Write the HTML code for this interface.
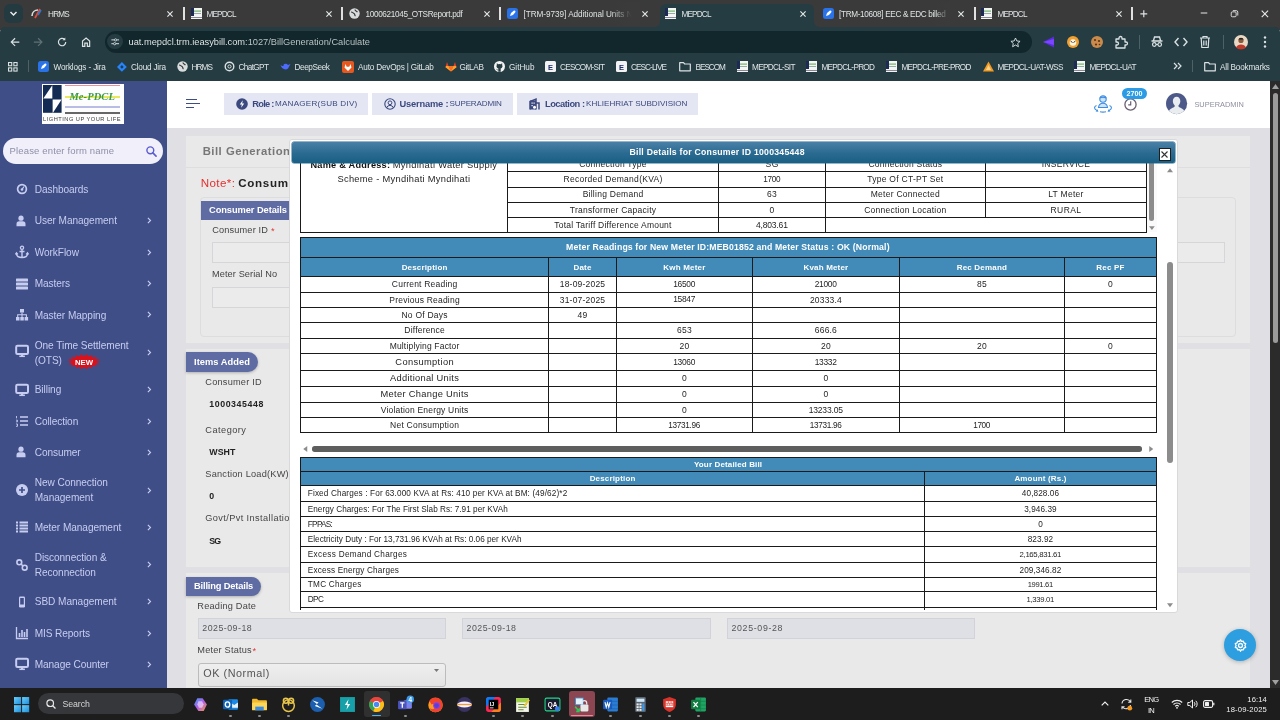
<!DOCTYPE html>
<html lang="en"><head><meta charset="utf-8"><title>MEPDCL</title>
<style>
*{box-sizing:border-box;margin:0;padding:0}
html,body{width:1280px;height:720px;overflow:hidden;background:#e4e4ea;font-family:"Liberation Sans",sans-serif}
.abs{position:absolute}
#root{position:relative;width:1280px;height:720px;overflow:hidden;will-change:transform}
svg{display:block;overflow:visible}
/* chrome */
#tabs{left:0;top:0;width:1280px;height:30px;background:#3a3a3a}
#toolbar{left:0;top:26.500px;width:1280px;height:53.500px;background:#253c42;border-radius:5px 5px 0 0}
.tab{position:absolute;top:0;height:27px;color:#dfe3e4;font-size:11.3px;line-height:27px;white-space:nowrap;overflow:hidden}
.tabx{position:absolute;top:9px;width:9px;height:9px}
.tsep{position:absolute;top:7px;width:1.5px;height:13px;background:#e0e0e0}
.fav{position:absolute;top:8px;width:11px;height:11px}
#url{left:105px;top:31px;width:927px;height:22px;border-radius:11px;background:#11272c}
.bm{position:absolute;top:56px;height:20px;line-height:20px;color:#e1e6e7;font-size:11px;white-space:nowrap;letter-spacing:-0.1px}
.bmi{position:absolute;top:61px;width:11px;height:11px}
/* sidebar */
#side{left:0;top:80px;width:167px;height:608px;background:#404e88}
.mi{position:absolute;left:34px;color:#c7cdf0;font-size:13px;line-height:15.5px;white-space:nowrap}
.chev{position:absolute;left:146px;width:5px;height:8px}
.ico{position:absolute;left:14px;width:14px;height:14px}
/* header */
#hdr{left:167px;top:80px;width:1103px;height:48px;background:#fff}
.pill{position:absolute;top:92px;height:22px;background:#e4e7f2;color:#3f4d87;font-size:11px;line-height:22px;white-space:nowrap}
.pill b{font-weight:bold}
/* page */
.card{position:absolute;background:#e9e9e9}
.pp{font-family:"Liberation Sans",sans-serif}
/* taskbar */
#task{left:0;top:688px;width:1280px;height:32px;background:#1d1d1d}

.t{position:absolute;white-space:nowrap}

</style></head><body><div id="root">
<div class="abs" id="tabs"></div>
<div class="abs" id="toolbar"></div>
<div class="abs" style="left:4px;top:4px;width:19px;height:19px;border-radius:6px;background:#223a40"><svg width="19" height="19" viewBox="0 0 19 19"><path d="M6.5 8l3 3 3-3" fill="none" stroke="#e8eced" stroke-width="1.5"/></svg></div>
<div class="abs" style="left:660.300px;top:4px;width:153.700px;height:24px;background:#253c42;border-radius:6px 6px 0 0"></div>
<svg class="abs" style="left:655.300px;top:21.500px" width="5" height="5" viewBox="0 0 5 5"><path d="M5 0v5H0A5 5 0 0 0 5 0z" fill="#253c42"/></svg>
<svg class="abs" style="left:814px;top:21.500px" width="5" height="5" viewBox="0 0 5 5"><path d="M0 0v5h5A5 5 0 0 1 0 0z" fill="#253c42"/></svg>
<svg class="abs" style="left:31px;top:8px" width="12" height="12" viewBox="0 0 12 12"><path d="M1 8c0-4 3-6 6-6" stroke="#ddd" stroke-width="1.6" fill="none"/><path d="M4 10l5-9" stroke="#e04a3a" stroke-width="1.8"/><path d="M7 7l3-5" stroke="#2a7bd0" stroke-width="1.6"/></svg>
<div class="t" style="left:48.1px;top:9px;height:11px;line-height:11px;font-size:8.2px;color:#dfe3e4;letter-spacing:-0.815px;">HRMS</div>
<svg class="abs" style="left:167.2px;top:10.600px" width="6" height="6" viewBox="0 0 6 6"><path d="M.4 .4l5.200 5.200M5.600 .4L.4 5.600" stroke="#e4e8e9" stroke-width="1.150" fill="none"/></svg>
<svg class="abs" style="left:191px;top:8px" width="11" height="11" viewBox="0 0 11 11"><rect width="11" height="11" fill="#f4f6f4"/><rect x="0" y="0" width="3" height="8" fill="#1c2a55"/><rect x="3" y="2.5" width="7" height="1.2" fill="#6fb56a"/><rect x="3" y="5" width="7" height="1" fill="#9aa"/><rect x="0" y="9" width="11" height="1" fill="#889"/></svg>
<div class="t" style="left:206.5px;top:9px;height:11px;line-height:11px;font-size:8.2px;color:#dfe3e4;letter-spacing:-0.835px;">MEPDCL</div>
<svg class="abs" style="left:326.2px;top:10.600px" width="6" height="6" viewBox="0 0 6 6"><path d="M.4 .4l5.200 5.200M5.600 .4L.4 5.600" stroke="#e4e8e9" stroke-width="1.150" fill="none"/></svg>
<svg class="abs" style="left:349px;top:8px" width="11" height="11" viewBox="0 0 11 11"><circle cx="5.5" cy="5.5" r="5.2" fill="#d8dcdd"/><path d="M2 4c1.5 0 2 1 3 1.5s.5 2 1.5 2.5M6 1.5c0 1.5 1.5 1.5 2.5 2.5" stroke="#3b3b3b" stroke-width="1.2" fill="none"/></svg>
<div class="t" style="left:365.5px;top:9px;height:11px;line-height:11px;font-size:8.2px;color:#dfe3e4;letter-spacing:-0.340px;">1000621045_OTSReport.pdf</div>
<svg class="abs" style="left:484.2px;top:10.600px" width="6" height="6" viewBox="0 0 6 6"><path d="M.4 .4l5.200 5.200M5.600 .4L.4 5.600" stroke="#e4e8e9" stroke-width="1.150" fill="none"/></svg>
<svg class="abs" style="left:507px;top:8px" width="11" height="11" viewBox="0 0 11 11"><rect width="11" height="11" rx="2.5" fill="#2a72e8"/><path d="M3 8l1-3 3-2.5 1.2.3.3 1.2L6 7z" fill="#fff"/></svg>
<div class="t" style="left:523.5px;top:9px;height:11px;line-height:11px;font-size:8.2px;color:#dfe3e4;letter-spacing:-0.038px;">[TRM-9739] Additional Units Not</div>
<svg class="abs" style="left:642.2px;top:10.600px" width="6" height="6" viewBox="0 0 6 6"><path d="M.4 .4l5.200 5.200M5.600 .4L.4 5.600" stroke="#e4e8e9" stroke-width="1.150" fill="none"/></svg>
<svg class="abs" style="left:665px;top:8px" width="11" height="11" viewBox="0 0 11 11"><rect width="11" height="11" fill="#f4f6f4"/><rect x="0" y="0" width="3" height="8" fill="#1c2a55"/><rect x="3" y="2.5" width="7" height="1.2" fill="#6fb56a"/><rect x="3" y="5" width="7" height="1" fill="#9aa"/><rect x="0" y="9" width="11" height="1" fill="#889"/></svg>
<div class="t" style="left:681.5px;top:9px;height:11px;line-height:11px;font-size:8.2px;color:#dfe3e4;letter-spacing:-0.835px;">MEPDCL</div>
<svg class="abs" style="left:800.2px;top:10.600px" width="6" height="6" viewBox="0 0 6 6"><path d="M.4 .4l5.200 5.200M5.600 .4L.4 5.600" stroke="#e4e8e9" stroke-width="1.150" fill="none"/></svg>
<svg class="abs" style="left:823px;top:8px" width="11" height="11" viewBox="0 0 11 11"><rect width="11" height="11" rx="2.5" fill="#2a72e8"/><path d="M3 8l1-3 3-2.5 1.2.3.3 1.2L6 7z" fill="#fff"/></svg>
<div class="t" style="left:839px;top:9px;height:11px;line-height:11px;font-size:8.2px;color:#dfe3e4;letter-spacing:-0.324px;">[TRM-10608] EEC &amp; EDC billed</div>
<svg class="abs" style="left:958.2px;top:10.600px" width="6" height="6" viewBox="0 0 6 6"><path d="M.4 .4l5.200 5.200M5.600 .4L.4 5.600" stroke="#e4e8e9" stroke-width="1.150" fill="none"/></svg>
<svg class="abs" style="left:981px;top:8px" width="11" height="11" viewBox="0 0 11 11"><rect width="11" height="11" fill="#f4f6f4"/><rect x="0" y="0" width="3" height="8" fill="#1c2a55"/><rect x="3" y="2.5" width="7" height="1.2" fill="#6fb56a"/><rect x="3" y="5" width="7" height="1" fill="#9aa"/><rect x="0" y="9" width="11" height="1" fill="#889"/></svg>
<div class="t" style="left:997.5px;top:9px;height:11px;line-height:11px;font-size:8.2px;color:#dfe3e4;letter-spacing:-0.835px;">MEPDCL</div>
<svg class="abs" style="left:1116.2px;top:10.600px" width="6" height="6" viewBox="0 0 6 6"><path d="M.4 .4l5.200 5.200M5.600 .4L.4 5.600" stroke="#e4e8e9" stroke-width="1.150" fill="none"/></svg>
<div class="abs" style="left:610px;top:2px;width:24px;height:24px;background:linear-gradient(90deg,rgba(59,59,59,0),#3b3b3b 90%)"></div><div class="abs" style="left:634px;top:2px;width:6px;height:24px;background:#3b3b3b"></div>
<div class="abs" style="left:934px;top:2px;width:16px;height:24px;background:linear-gradient(90deg,rgba(59,59,59,0),#3b3b3b)"></div>
<div class="tsep" style="left:183px"></div>
<div class="tsep" style="left:341px"></div>
<div class="tsep" style="left:499px"></div>
<div class="tsep" style="left:974px"></div>
<div class="tsep" style="left:1131px"></div>
<svg class="abs" style="left:1139.700px;top:9.800px" width="7.600" height="7.600" viewBox="0 0 11 11"><path d="M5.5 0.5v10M0.5 5.5h10" stroke="#dfe3e4" stroke-width="1.700"/></svg>
<svg class="abs" style="left:1199.500px;top:9.200px" width="8" height="8" viewBox="0 0 11 11"><path d="M1 5.5h9" stroke="#e8e8e8" stroke-width="1.400"/></svg>
<svg class="abs" style="left:1229.500px;top:9.200px" width="9" height="9" viewBox="0 0 11 11"><rect x="1.5" y="3.5" width="6" height="6" rx="1.3" fill="none" stroke="#e8e8e8" stroke-width="1.1"/><path d="M3.5 2h4.2a1.8 1.8 0 0 1 1.8 1.8V8" fill="none" stroke="#e8e8e8" stroke-width="1.1"/></svg>
<svg class="abs" style="left:1261px;top:9.600px" width="7.800" height="7.800" viewBox="0 0 11 11"><path d="M1 1l9 9M10 1l-9 9" stroke="#e8e8e8" stroke-width="1.600"/></svg>
<svg class="abs" style="left:9.9px;top:36.900px" width="10.200" height="10.200" viewBox="0 0 12 12"><path d="M11 6H2M6 1.5L1.5 6 6 10.5" fill="none" stroke="#dbe2e3" stroke-width="1.4"/></svg>
<svg class="abs" style="left:32.9px;top:36.900px" width="10.200" height="10.200" viewBox="0 0 12 12"><path d="M1 6h9M6 1.5L10.500 6 6 10.500" fill="none" stroke="#5f7276" stroke-width="1.4"/></svg>
<svg class="abs" style="left:56.9px;top:36.900px" width="10.200" height="10.200" viewBox="0 0 12 12"><path d="M10.300 6a4.300 4.300 0 1 1-1.300-3.100" fill="none" stroke="#dbe2e3" stroke-width="1.4"/><path d="M9.800 0.500v3.300h-3.300z" fill="#dbe2e3"/></svg>
<svg class="abs" style="left:80.9px;top:36.900px" width="10.200" height="10.200" viewBox="0 0 12 12"><path d="M1.800 11V4.800L6 1.300l4.200 3.500V11H7.500V7.300h-3V11z" fill="none" stroke="#dbe2e3" stroke-width="1.4"/></svg>
<div class="abs" id="url"></div>
<div class="abs" style="left:107.200px;top:33.700px;width:15.600px;height:15.600px;border-radius:8px;background:#253c42"></div>
<svg class="abs" style="left:110.800px;top:37.700px" width="8.400" height="7.600" viewBox="0 0 11 10"><path d="M0.500 2.500h4M8 2.500h2.500M0.500 7.500h2.500M6.500 7.500h4" stroke="#dbe2e3" stroke-width="1.300"/><circle cx="6" cy="2.500" r="1.500" fill="none" stroke="#dbe2e3" stroke-width="1.100"/><circle cx="4.800" cy="7.500" r="1.500" fill="none" stroke="#dbe2e3" stroke-width="1.100"/></svg>
<div class="t" style="left:128.5px;top:36px;height:13px;line-height:13px;font-size:9.3px;color:transparent;letter-spacing:-0.025px;background:linear-gradient(90deg,#f1f4f4 116.6px,#c5cccd 116.6px);-webkit-background-clip:text;background-clip:text;">uat.mepdcl.trm.ieasybill.com:1027/BillGeneration/Calculate</div>
<svg class="abs" style="left:1010px;top:36.500px" width="11" height="11" viewBox="0 0 13 13"><path d="M6.500 1.200l1.600 3.500 3.800.400-2.800 2.600.800 3.800-3.400-2-3.400 2 .800-3.800L1.100 5.100l3.800-.400z" fill="none" stroke="#dbe2e3" stroke-width="1.100" stroke-linejoin="round"/></svg>
<svg class="abs" style="left:1042px;top:35px" width="14" height="14" viewBox="0 0 14 14"><path d="M1 7L12 1.500V12.500z" fill="#5b2be0"/><path d="M1 7L12 4v6z" fill="#7a45ff"/></svg>
<svg class="abs" style="left:1066px;top:35px" width="14" height="14" viewBox="0 0 14 14"><circle cx="7" cy="7" r="6" fill="#f0a030"/><circle cx="7" cy="7.500" r="3.300" fill="#fff3dc"/><path d="M4.500 6l2 1.500M9.500 6l-2 1.500" stroke="#333" stroke-width="1"/></svg>
<svg class="abs" style="left:1090px;top:35px" width="14" height="14" viewBox="0 0 14 14"><circle cx="7" cy="7" r="6" fill="#c98a4b"/><circle cx="5" cy="5" r="1.100" fill="#5a3316"/><circle cx="9" cy="6" r="1.100" fill="#5a3316"/><circle cx="6" cy="9.500" r="1.100" fill="#5a3316"/><circle cx="9.500" cy="9.500" r=".8" fill="#5a3316"/></svg>
<svg class="abs" style="left:1114px;top:35px" width="14" height="14" viewBox="0 0 14 14"><path d="M2 4h3V3a1.500 1.500 0 0 1 3 0v1h3v3h1a1.500 1.500 0 0 1 0 3h-1v3H2v-3h1a1.500 1.500 0 0 0 0-3H2z" fill="none" stroke="#dbe2e3" stroke-width="1.300" stroke-linejoin="round"/></svg>
<div class="abs" style="left:1139px;top:35px;width:1px;height:14px;background:#4d6166"></div>
<svg class="abs" style="left:1150px;top:35px" width="14" height="14" viewBox="0 0 14 14"><path d="M3.500 5.500L4.500 2h5l1 3.500M1.500 6h11" fill="none" stroke="#dbe2e3" stroke-width="1.300"/><circle cx="4.300" cy="9.500" r="1.800" fill="none" stroke="#dbe2e3" stroke-width="1.200"/><circle cx="9.700" cy="9.500" r="1.800" fill="none" stroke="#dbe2e3" stroke-width="1.200"/><path d="M6 9.500h2" stroke="#dbe2e3" stroke-width="1.100"/></svg>
<svg class="abs" style="left:1174px;top:36px" width="14" height="12" viewBox="0 0 14 12"><path d="M4.500 2L1 6l3.500 4M9.500 2L13 6l-3.500 4" fill="none" stroke="#dbe2e3" stroke-width="1.400"/></svg>
<svg class="abs" style="left:1199px;top:35px" width="12" height="14" viewBox="0 0 12 14"><path d="M1 3h10M4 3V1.500h4V3M2.200 3l.600 9.500h6.400L9.800 3M4.800 5.500v5M7.200 5.500v5" fill="none" stroke="#dbe2e3" stroke-width="1.200"/></svg>
<div class="abs" style="left:1223px;top:35px;width:1px;height:14px;background:#4d6166"></div>
<svg class="abs" style="left:1234px;top:35px" width="14" height="14" viewBox="0 0 14 14"><circle cx="7" cy="7" r="7" fill="#e9d9c4"/><circle cx="7" cy="5.500" r="2.600" fill="#8a5a3c"/><path d="M2 12.500a5.500 5 0 0 1 10 0A7 7 0 0 1 2 12.500z" fill="#c0392b"/><path d="M4.300 4.500a2.800 2.500 0 0 1 5.400 0z" fill="#222"/></svg>
<svg class="abs" style="left:1263px;top:35px" width="4" height="14" viewBox="0 0 4 14"><circle cx="2" cy="2.500" r="1.200" fill="#dbe2e3"/><circle cx="2" cy="7" r="1.200" fill="#dbe2e3"/><circle cx="2" cy="11.500" r="1.200" fill="#dbe2e3"/></svg>
<svg class="abs" style="left:8.300px;top:61.800px" width="9.800" height="9.800" viewBox="0 0 11 11"><g fill="none" stroke="#dbe2e3" stroke-width="1.200"><rect x=".6" y=".6" width="3.600" height="3.600"/><rect x="6.600" y=".6" width="3.600" height="3.600"/><rect x=".6" y="6.600" width="3.600" height="3.600"/><rect x="6.600" y="6.600" width="3.600" height="3.600"/></g></svg>
<div class="abs" style="left:28px;top:60px;width:1px;height:12px;background:#4d6166"></div>
<svg class="abs" style="left:38px;top:61px" width="11" height="11" viewBox="0 0 11 11"><rect width="11" height="11" rx="2.5" fill="#2a72e8"/><path d="M3 8l1-3 3-2.5 1.2.3.3 1.2L6 7z" fill="#fff"/></svg>
<div class="t" style="left:53.5px;top:62px;height:11px;line-height:11px;font-size:8.2px;color:#e1e6e7;letter-spacing:-0.145px;">Worklogs - Jira</div>
<svg class="bmi" style="left:117px;width:9.800px;height:9.800px;top:61.700px" viewBox="0 0 11 11"><path d="M5.500 0L11 5.500 5.500 11 0 5.500z" fill="#2684ff"/><path d="M5.500 3.500l2 2-2 2-2-2z" fill="#243c42"/></svg>
<div class="t" style="left:131px;top:62px;height:11px;line-height:11px;font-size:8.2px;color:#e1e6e7;letter-spacing:-0.213px;">Cloud Jira</div>
<svg class="abs" style="left:177px;top:61px" width="11" height="11" viewBox="0 0 11 11"><circle cx="5.5" cy="5.5" r="5.2" fill="#d8dcdd"/><path d="M2 4c1.5 0 2 1 3 1.5s.5 2 1.5 2.5M6 1.5c0 1.5 1.5 1.5 2.5 2.5" stroke="#3b3b3b" stroke-width="1.2" fill="none"/></svg>
<div class="t" style="left:191.5px;top:62px;height:11px;line-height:11px;font-size:8.2px;color:#e1e6e7;letter-spacing:-0.881px;">HRMS</div>
<svg class="bmi" style="left:224px" viewBox="0 0 11 11"><circle cx="5.500" cy="5.500" r="4.300" fill="none" stroke="#dbe2e3" stroke-width="1.400"/><circle cx="5.500" cy="5.500" r="1.600" fill="none" stroke="#dbe2e3" stroke-width="1"/></svg>
<div class="t" style="left:238.5px;top:62px;height:11px;line-height:11px;font-size:8.2px;color:#e1e6e7;letter-spacing:-0.613px;">ChatGPT</div>
<svg class="bmi" style="left:280px" viewBox="0 0 11 11"><path d="M.5 4c1 4 5 5.500 7.500 3.500L10.500 3 8 4C6.500 2 3 2.500 3.500 5 2 5 1 4.500.5 4z" fill="#4d6bfe"/></svg>
<div class="t" style="left:294.5px;top:62px;height:11px;line-height:11px;font-size:8.2px;color:#e1e6e7;letter-spacing:-0.399px;">DeepSeek</div>
<svg class="bmi" style="left:342px;width:12px;height:12px" viewBox="0 0 12 12"><rect width="12" height="12" rx="2" fill="#e8581e"/><path d="M6 10L2.500 6.500l1-3.500 1.200 2.800h2.600L8.500 3l1 3.500z" fill="#fff"/></svg>
<div class="t" style="left:358px;top:62px;height:11px;line-height:11px;font-size:8.2px;color:#e1e6e7;letter-spacing:-0.190px;">Auto DevOps | GitLab</div>
<svg class="bmi" style="left:445px;width:12px;height:11px" viewBox="0 0 12 11"><path d="M6 10.500L.5 6.300 2 1l1.500 4h5L10 1l1.500 5.300z" fill="#e24329"/><path d="M6 10.500L3.500 5h5z" fill="#fc6d26"/><path d="M.5 6.300L6 10.500 3.500 5H1zM11.500 6.300L6 10.500 8.500 5H11z" fill="#fca326"/></svg>
<div class="t" style="left:459.5px;top:62px;height:11px;line-height:11px;font-size:8.2px;color:#e1e6e7;letter-spacing:-0.295px;">GitLAB</div>
<svg class="bmi" style="left:494px" viewBox="0 0 11 11"><circle cx="5.500" cy="5.500" r="5.500" fill="#f4f4f4"/><ellipse cx="5.500" cy="5.300" rx="2.900" ry="2.400" fill="#253c42"/><path d="M2.800 4.500V2.300l1.600 1zM8.200 4.500V2.300l-1.600 1z" fill="#253c42"/><path d="M4.300 7.200h2.400v3.600H4.300z" fill="#253c42"/><path d="M4.300 8.800c-1 .3-1.600-.2-2-.9" stroke="#253c42" stroke-width=".7" fill="none"/></svg>
<div class="t" style="left:509px;top:62px;height:11px;line-height:11px;font-size:8.2px;color:#e1e6e7;letter-spacing:-0.004px;">GitHub</div>
<svg class="bmi" style="left:545px" viewBox="0 0 11 11"><rect width="11" height="11" rx="1.500" fill="#f3f3f3"/><text x="3" y="8.500" font-size="7.500" font-weight="bold" fill="#1d2d6b" font-family="Liberation Sans,sans-serif">E</text></svg>
<div class="t" style="left:560px;top:62px;height:11px;line-height:11px;font-size:8.2px;color:#e1e6e7;letter-spacing:-0.720px;">CESCOM-SIT</div>
<svg class="bmi" style="left:616px" viewBox="0 0 11 11"><rect width="11" height="11" rx="1.500" fill="#f3f3f3"/><text x="3" y="8.500" font-size="7.500" font-weight="bold" fill="#1d2d6b" font-family="Liberation Sans,sans-serif">E</text></svg>
<div class="t" style="left:631px;top:62px;height:11px;line-height:11px;font-size:8.2px;color:#e1e6e7;letter-spacing:-0.911px;">CESC-LIVE</div>
<svg class="bmi" style="left:679px;width:12px" viewBox="0 0 12 11"><path d="M.7 1.700h3.800l1.200 1.300h5.600v6.800H.7z" fill="none" stroke="#dbe2e3" stroke-width="1.200" stroke-linejoin="round"/></svg>
<div class="t" style="left:695.5px;top:62px;height:11px;line-height:11px;font-size:8.2px;color:#e1e6e7;letter-spacing:-1.008px;">BESCOM</div>
<svg class="abs" style="left:737px;top:61px" width="11" height="11" viewBox="0 0 11 11"><rect width="11" height="11" fill="#f4f6f4"/><rect x="0" y="0" width="3" height="8" fill="#1c2a55"/><rect x="3" y="2.5" width="7" height="1.2" fill="#6fb56a"/><rect x="3" y="5" width="7" height="1" fill="#9aa"/><rect x="0" y="9" width="11" height="1" fill="#889"/></svg>
<div class="t" style="left:752px;top:62px;height:11px;line-height:11px;font-size:8.2px;color:#e1e6e7;letter-spacing:-0.685px;">MEPDCL-SIT</div>
<svg class="abs" style="left:806px;top:61px" width="11" height="11" viewBox="0 0 11 11"><rect width="11" height="11" fill="#f4f6f4"/><rect x="0" y="0" width="3" height="8" fill="#1c2a55"/><rect x="3" y="2.5" width="7" height="1.2" fill="#6fb56a"/><rect x="3" y="5" width="7" height="1" fill="#9aa"/><rect x="0" y="9" width="11" height="1" fill="#889"/></svg>
<div class="t" style="left:821.5px;top:62px;height:11px;line-height:11px;font-size:8.2px;color:#e1e6e7;letter-spacing:-0.710px;">MEPDCL-PROD</div>
<svg class="abs" style="left:886px;top:61px" width="11" height="11" viewBox="0 0 11 11"><rect width="11" height="11" fill="#f4f6f4"/><rect x="0" y="0" width="3" height="8" fill="#1c2a55"/><rect x="3" y="2.5" width="7" height="1.2" fill="#6fb56a"/><rect x="3" y="5" width="7" height="1" fill="#9aa"/><rect x="0" y="9" width="11" height="1" fill="#889"/></svg>
<div class="t" style="left:901.5px;top:62px;height:11px;line-height:11px;font-size:8.2px;color:#e1e6e7;letter-spacing:-0.728px;">MEPDCL-PRE-PROD</div>
<svg class="bmi" style="left:983px" viewBox="0 0 11 11"><path d="M5.500 0.500L11 10.500H0z" fill="#f59b23"/><path d="M5.500 4L8 9H3z" fill="#fbd38a"/></svg>
<div class="t" style="left:997.5px;top:62px;height:11px;line-height:11px;font-size:8.2px;color:#e1e6e7;letter-spacing:-0.589px;">MEPDCL-UAT-WSS</div>
<svg class="abs" style="left:1074px;top:61px" width="11" height="11" viewBox="0 0 11 11"><rect width="11" height="11" fill="#f4f6f4"/><rect x="0" y="0" width="3" height="8" fill="#1c2a55"/><rect x="3" y="2.5" width="7" height="1.2" fill="#6fb56a"/><rect x="3" y="5" width="7" height="1" fill="#9aa"/><rect x="0" y="9" width="11" height="1" fill="#889"/></svg>
<div class="t" style="left:1089.5px;top:62px;height:11px;line-height:11px;font-size:8.2px;color:#e1e6e7;letter-spacing:-0.633px;">MEPDCL-UAT</div>
<svg class="abs" style="left:1173px;top:62px" width="9" height="8" viewBox="0 0 9 8"><path d="M1 1l3 3-3 3M5 1l3 3-3 3" fill="none" stroke="#dbe2e3" stroke-width="1.200"/></svg>
<div class="abs" style="left:1192px;top:60px;width:1px;height:12px;background:#4d6166"></div>
<svg class="bmi" style="left:1204px;width:12px" viewBox="0 0 12 11"><path d="M.7 1.700h3.800l1.200 1.300h5.600v6.800H.7z" fill="none" stroke="#dbe2e3" stroke-width="1.200" stroke-linejoin="round"/></svg>
<div class="t" style="left:1220px;top:62px;height:11px;line-height:11px;font-size:8.2px;color:#e1e6e7;letter-spacing:-0.200px;">All Bookmarks</div>
<div class="abs" style="left:167px;top:80px;width:1103px;height:608px;background:#dfdfe4"></div>
<div class="abs" id="side"></div>
<div class="abs" style="left:42px;top:84px;width:82px;height:40px;background:#fdfdfd"></div>
<svg class="abs" style="left:42.900px;top:85.200px" width="18.600" height="27.800" viewBox="0 0 18.600 27.800"><rect width="18.600" height="27.800" fill="#132a52"/><path d="M9.300 0.300V13.400H0.300z" fill="#fdfdfd"/><path d="M9.600 14.400H18.600L10 27.800H9.600z" fill="#fdfdfd"/></svg>
<div class="abs" style="left:65px;top:85px;width:55px;height:1.300px;background:#ea8fa0"></div>
<div class="abs" style="left:65px;top:96.200px;width:55px;height:1.500px;background:#ebe75a"></div>
<div class="abs" style="left:65px;top:106.200px;width:55px;height:1.500px;background:#b9bde6"></div>
<div class="abs" style="left:65px;top:112.100px;width:55px;height:1.700px;background:#666"></div>
<div class="t" style="left:69.4px;top:90px;height:14px;line-height:14px;font-size:10.5px;color:#3a9a4a;letter-spacing:0.089px;font-weight:bold;font-family:'Liberation Serif',serif;font-style:italic;">Me-PDCL</div>
<div class="t" style="left:43.1px;top:115px;height:8px;line-height:8px;font-size:5.7px;color:#3c3c3c;letter-spacing:0.481px;">LIGHTING UP YOUR LIFE</div>
<div class="abs" style="left:3px;top:138px;width:160px;height:26px;border-radius:13px;background:#f1f0fa"></div>
<div class="t" style="left:9.6px;top:144px;height:13px;line-height:13px;font-size:9.5px;color:#8d8fa8;letter-spacing:0.144px;">Please enter form name</div>
<svg class="abs" style="left:146.300px;top:146px" width="10.800" height="10.800" viewBox="0 0 12 12"><circle cx="4.800" cy="4.800" r="3.800" fill="none" stroke="#5a5cd0" stroke-width="1.600"/><path d="M7.600 7.600l3.600 3.600" stroke="#5a5cd0" stroke-width="1.800" stroke-linecap="round"/></svg>
<div class="t" style="left:34.7px;top:183px;height:14px;line-height:14px;font-size:10.1px;color:#c7cdf0;letter-spacing:-0.084px;">Dashboards</div>
<svg class="abs" style="left:15px;top:182.3px" width="14" height="14" viewBox="0 0 14 14"><circle cx="7" cy="7" r="4.400" fill="none" stroke="#c7cdf0" stroke-width="1.700"/><circle cx="7" cy="7.500" r="1.300" fill="#c7cdf0"/><path d="M7 7.500l2-3" stroke="#c7cdf0" stroke-width="1.200"/></svg>
<div class="t" style="left:34.7px;top:214px;height:14px;line-height:14px;font-size:10.1px;color:#c7cdf0;letter-spacing:-0.056px;">User Management</div>
<svg class="abs" style="left:146.600px;top:217.3px" width="4.400" height="7" viewBox="0 0 5 8"><path d="M1 1l3 3-3 3" fill="none" stroke="#c7cdf0" stroke-width="1.300"/></svg>
<svg class="abs" style="left:15px;top:213.8px" width="14" height="14" viewBox="0 0 14 14"><circle cx="6" cy="4.200" r="2.600" fill="#c7cdf0"/><path d="M1.500 12.300v-2.300a2.800 2.800 0 0 1 2.800-2.800h3.400a2.800 2.800 0 0 1 2.800 2.800v2.300z" fill="#c7cdf0"/></svg>
<div class="t" style="left:34.7px;top:246px;height:14px;line-height:14px;font-size:10.1px;color:#c7cdf0;letter-spacing:-0.058px;">WorkFlow</div>
<svg class="abs" style="left:146.600px;top:248.7px" width="4.400" height="7" viewBox="0 0 5 8"><path d="M1 1l3 3-3 3" fill="none" stroke="#c7cdf0" stroke-width="1.300"/></svg>
<svg class="abs" style="left:15px;top:245.2px" width="14" height="14" viewBox="0 0 14 14"><circle cx="7" cy="2.800" r="1.600" fill="none" stroke="#c7cdf0" stroke-width="1.300"/><path d="M7 4.500v8M4.500 6.500h5M1.500 8.500c0 2.500 2.500 4 5.500 4s5.500-1.500 5.500-4M.5 9.500l1-1.500 1.300 1.500M11.200 9.500l1.300-1.500 1 1.500" fill="none" stroke="#c7cdf0" stroke-width="1.400"/></svg>
<div class="t" style="left:34.7px;top:277px;height:14px;line-height:14px;font-size:10.1px;color:#c7cdf0;letter-spacing:-0.103px;">Masters</div>
<svg class="abs" style="left:146.600px;top:280px" width="4.400" height="7" viewBox="0 0 5 8"><path d="M1 1l3 3-3 3" fill="none" stroke="#c7cdf0" stroke-width="1.300"/></svg>
<svg class="abs" style="left:15px;top:276.5px" width="14" height="14" viewBox="0 0 14 14"><rect x="1" y="1.500" width="12" height="3" rx=".6" fill="#c7cdf0"/><rect x="1" y="5.500" width="12" height="3" rx=".6" fill="#c7cdf0"/><rect x="1" y="9.500" width="12" height="3" rx=".6" fill="#c7cdf0"/></svg>
<div class="t" style="left:34.7px;top:309px;height:14px;line-height:14px;font-size:10.1px;color:#c7cdf0;letter-spacing:-0.063px;">Master Mapping</div>
<svg class="abs" style="left:146.600px;top:311.3px" width="4.400" height="7" viewBox="0 0 5 8"><path d="M1 1l3 3-3 3" fill="none" stroke="#c7cdf0" stroke-width="1.300"/></svg>
<svg class="abs" style="left:15px;top:307.8px" width="14" height="14" viewBox="0 0 14 14"><rect x="5" y="1" width="4" height="3.500" fill="#c7cdf0"/><rect x="1" y="9" width="3.500" height="3.500" fill="#c7cdf0"/><rect x="5.300" y="9" width="3.500" height="3.500" fill="#c7cdf0"/><rect x="9.600" y="9" width="3.500" height="3.500" fill="#c7cdf0"/><path d="M7 4.500v4.500M2.700 9V6.800h8.700V9" fill="none" stroke="#c7cdf0" stroke-width="1.100"/></svg>
<div class="t" style="left:34.7px;top:339px;height:14px;line-height:14px;font-size:10.1px;color:#c7cdf0;letter-spacing:-0.048px;">One Time Settlement</div>
<svg class="abs" style="left:146.600px;top:348.8px" width="4.400" height="7" viewBox="0 0 5 8"><path d="M1 1l3 3-3 3" fill="none" stroke="#c7cdf0" stroke-width="1.300"/></svg>
<svg class="abs" style="left:15px;top:344px" width="14" height="14" viewBox="0 0 14 14"><rect x="1.200" y="1.700" width="11.800" height="8.200" rx="1.200" fill="none" stroke="#c7cdf0" stroke-width="2"/><path d="M4.300 12.300h5.600" stroke="#c7cdf0" stroke-width="1.500"/><path d="M6 10.500h2.200v1.500H6z" fill="#c7cdf0"/></svg>
<div class="t" style="left:34.7px;top:354px;height:14px;line-height:14px;font-size:10.1px;color:#c7cdf0;letter-spacing:-0.047px;">(OTS)</div>
<div class="t" style="left:34.7px;top:383px;height:14px;line-height:14px;font-size:10.1px;color:#c7cdf0;letter-spacing:-0.058px;">Billing</div>
<svg class="abs" style="left:146.600px;top:386.1px" width="4.400" height="7" viewBox="0 0 5 8"><path d="M1 1l3 3-3 3" fill="none" stroke="#c7cdf0" stroke-width="1.300"/></svg>
<svg class="abs" style="left:15px;top:382.6px" width="14" height="14" viewBox="0 0 14 14"><rect x="1.200" y="1.700" width="11.800" height="8.200" rx="1.200" fill="none" stroke="#c7cdf0" stroke-width="2"/><path d="M4.300 12.300h5.600" stroke="#c7cdf0" stroke-width="1.500"/><path d="M6 10.500h2.200v1.500H6z" fill="#c7cdf0"/></svg>
<div class="t" style="left:34.7px;top:415px;height:14px;line-height:14px;font-size:10.1px;color:#c7cdf0;letter-spacing:-0.083px;">Collection</div>
<svg class="abs" style="left:146.600px;top:417.5px" width="4.400" height="7" viewBox="0 0 5 8"><path d="M1 1l3 3-3 3" fill="none" stroke="#c7cdf0" stroke-width="1.300"/></svg>
<svg class="abs" style="left:15px;top:414px" width="14" height="14" viewBox="0 0 14 14"><path d="M5 3h8M5 7h8M5 11h8" stroke="#c7cdf0" stroke-width="1.600"/><path d="M1.500 2v2.300M1 6.200h1.500v1.600H1M1 10h1.500v2.300H1" stroke="#c7cdf0" stroke-width=".9" fill="none"/></svg>
<div class="t" style="left:34.7px;top:446px;height:14px;line-height:14px;font-size:10.1px;color:#c7cdf0;letter-spacing:-0.084px;">Consumer</div>
<svg class="abs" style="left:146.600px;top:448.8px" width="4.400" height="7" viewBox="0 0 5 8"><path d="M1 1l3 3-3 3" fill="none" stroke="#c7cdf0" stroke-width="1.300"/></svg>
<svg class="abs" style="left:15px;top:445.3px" width="14" height="14" viewBox="0 0 14 14"><circle cx="6" cy="4.200" r="2.600" fill="#c7cdf0"/><path d="M1.500 12.300v-2.300a2.800 2.800 0 0 1 2.800-2.800h3.400a2.800 2.800 0 0 1 2.800 2.800v2.300z" fill="#c7cdf0"/></svg>
<div class="t" style="left:34.7px;top:476px;height:14px;line-height:14px;font-size:10.1px;color:#c7cdf0;letter-spacing:-0.062px;">New Connection</div>
<svg class="abs" style="left:146.600px;top:486.5px" width="4.400" height="7" viewBox="0 0 5 8"><path d="M1 1l3 3-3 3" fill="none" stroke="#c7cdf0" stroke-width="1.300"/></svg>
<svg class="abs" style="left:15px;top:483px" width="14" height="14" viewBox="0 0 14 14"><circle cx="7" cy="7" r="6" fill="#c7cdf0"/><path d="M7 4v6M4 7h6" stroke="#404e88" stroke-width="1.700"/></svg>
<div class="t" style="left:34.7px;top:491px;height:14px;line-height:14px;font-size:10.1px;color:#c7cdf0;letter-spacing:-0.039px;">Management</div>
<div class="t" style="left:34.7px;top:521px;height:14px;line-height:14px;font-size:10.1px;color:#c7cdf0;letter-spacing:-0.065px;">Meter Management</div>
<svg class="abs" style="left:146.600px;top:523.5px" width="4.400" height="7" viewBox="0 0 5 8"><path d="M1 1l3 3-3 3" fill="none" stroke="#c7cdf0" stroke-width="1.300"/></svg>
<svg class="abs" style="left:15px;top:520px" width="14" height="14" viewBox="0 0 14 14"><path d="M1 2.500h2M4.500 2.500h8.500M1 5.500h2M4.500 5.500h8.500M1 8.500h2M4.500 8.500h8.500M1 11.500h2M4.500 11.500h8.500" stroke="#c7cdf0" stroke-width="1.800"/></svg>
<div class="t" style="left:34.7px;top:551px;height:14px;line-height:14px;font-size:10.1px;color:#c7cdf0;letter-spacing:-0.070px;">Disconnection &amp;</div>
<svg class="abs" style="left:146.600px;top:561.2px" width="4.400" height="7" viewBox="0 0 5 8"><path d="M1 1l3 3-3 3" fill="none" stroke="#c7cdf0" stroke-width="1.300"/></svg>
<svg class="abs" style="left:15px;top:557.7px" width="14" height="14" viewBox="0 0 14 14"><circle cx="4.300" cy="4.300" r="2.400" fill="none" stroke="#c7cdf0" stroke-width="1.600"/><circle cx="9.700" cy="9.700" r="2.400" fill="none" stroke="#c7cdf0" stroke-width="1.600"/><path d="M6 6l2 2" stroke="#c7cdf0" stroke-width="1.600"/></svg>
<div class="t" style="left:34.7px;top:566px;height:14px;line-height:14px;font-size:10.1px;color:#c7cdf0;letter-spacing:-0.042px;">Reconnection</div>
<div class="t" style="left:34.7px;top:595px;height:14px;line-height:14px;font-size:10.1px;color:#c7cdf0;letter-spacing:-0.041px;">SBD Management</div>
<svg class="abs" style="left:146.600px;top:598.1px" width="4.400" height="7" viewBox="0 0 5 8"><path d="M1 1l3 3-3 3" fill="none" stroke="#c7cdf0" stroke-width="1.300"/></svg>
<svg class="abs" style="left:15px;top:594.6px" width="14" height="14" viewBox="0 0 14 14"><rect x="4" y="1.500" width="6" height="11" rx="1.200" fill="#c7cdf0"/><rect x="5.200" y="3" width="3.600" height="6.500" fill="#404e88"/></svg>
<div class="t" style="left:34.7px;top:627px;height:14px;line-height:14px;font-size:10.1px;color:#c7cdf0;letter-spacing:-0.083px;">MIS Reports</div>
<svg class="abs" style="left:146.600px;top:629.5px" width="4.400" height="7" viewBox="0 0 5 8"><path d="M1 1l3 3-3 3" fill="none" stroke="#c7cdf0" stroke-width="1.300"/></svg>
<svg class="abs" style="left:15px;top:626px" width="14" height="14" viewBox="0 0 14 14"><path d="M1.500 1v11.500H13" fill="none" stroke="#c7cdf0" stroke-width="1.300"/><path d="M4.500 11V7M7 11V4M9.500 11V6M12 11V3" stroke="#c7cdf0" stroke-width="1.600"/></svg>
<div class="t" style="left:34.7px;top:658px;height:14px;line-height:14px;font-size:10.1px;color:#c7cdf0;letter-spacing:-0.072px;">Manage Counter</div>
<svg class="abs" style="left:146.600px;top:660.8px" width="4.400" height="7" viewBox="0 0 5 8"><path d="M1 1l3 3-3 3" fill="none" stroke="#c7cdf0" stroke-width="1.300"/></svg>
<svg class="abs" style="left:15px;top:657.3px" width="14" height="14" viewBox="0 0 14 14"><rect x="1.200" y="1.700" width="11.800" height="8.200" rx="1.200" fill="none" stroke="#c7cdf0" stroke-width="2"/><path d="M4.300 12.300h5.600" stroke="#c7cdf0" stroke-width="1.500"/><path d="M6 10.500h2.200v1.500H6z" fill="#c7cdf0"/></svg>
<svg class="abs" style="left:67.400px;top:353.600px" width="34" height="15.300" viewBox="0 0 32 14.400"><polygon points="32.00,7.20 27.34,8.10 31.04,9.66 25.98,9.79 28.26,11.83 23.40,11.17 24.00,13.44 19.94,12.07 18.78,14.29 16.00,12.38 13.22,14.29 12.06,12.07 8.00,13.44 8.60,11.17 3.74,11.83 6.02,9.79 0.96,9.66 4.66,8.10 0.00,7.20 4.66,6.30 0.96,4.74 6.02,4.61 3.74,2.57 8.60,3.23 8.00,0.96 12.06,2.33 13.22,0.11 16.00,2.02 18.78,0.11 19.94,2.33 24.00,0.96 23.40,3.23 28.26,2.57 25.98,4.61 31.04,4.74 27.34,6.30" fill="#d8121c"/><text x="16" y="9.900" text-anchor="middle" font-family="Liberation Sans,sans-serif" font-weight="bold" font-size="7.300" fill="#fff">NEW</text></svg>
<div class="abs" id="hdr"></div>
<div class="abs" style="left:186px;top:99px;width:10.500px;height:1px;background:#3f4d87"></div><div class="abs" style="left:186px;top:103px;width:13.500px;height:1px;background:#3f4d87"></div><div class="abs" style="left:186px;top:107px;width:7.500px;height:1px;background:#3f4d87"></div>
<div class="abs" style="left:224px;top:93px;width:143.5px;height:21.500px;background:#e4e7f3"></div>
<div class="abs" style="left:371.5px;top:93px;width:141.5px;height:21.500px;background:#e4e7f3"></div>
<div class="abs" style="left:516.5px;top:93px;width:181px;height:21.500px;background:#e4e7f3"></div>
<svg class="abs" style="left:235.500px;top:98px" width="12" height="12" viewBox="0 0 12 12"><circle cx="6" cy="6" r="5.800" fill="#3c497f"/><path d="M6.800 2.300L3.800 6.600h2l-.6 3.100 3-4.300h-2z" fill="#fff"/></svg>
<div class="t" style="left:252.2px;top:98px;height:13px;line-height:13px;font-size:9.3px;color:#3c497f;letter-spacing:-0.727px;font-weight:bold;">Role :</div>
<div class="t" style="left:275px;top:98px;height:11px;line-height:11px;font-size:8.1px;color:#3c497f;letter-spacing:0.236px;">MANAGER(SUB DIV)</div>
<svg class="abs" style="left:383.500px;top:98px" width="12" height="12" viewBox="0 0 12 12"><circle cx="6" cy="6" r="5.200" fill="none" stroke="#3c497f" stroke-width="1.100"/><circle cx="6" cy="4.800" r="1.900" fill="none" stroke="#3c497f" stroke-width="1"/><path d="M2.600 9.800a3.600 3.600 0 0 1 6.800 0" fill="none" stroke="#3c497f" stroke-width="1"/></svg>
<div class="t" style="left:399.5px;top:98px;height:13px;line-height:13px;font-size:9.3px;color:#3c497f;letter-spacing:-0.184px;font-weight:bold;">Username :</div>
<div class="t" style="left:449.5px;top:98px;height:11px;line-height:11px;font-size:8.1px;color:#3c497f;letter-spacing:-0.167px;">SUPERADMIN</div>
<svg class="abs" style="left:529px;top:98px" width="11" height="12" viewBox="0 0 11 12"><path d="M1 11.500V3.500L7 1v10.500M7 5h3v6.500" fill="none" stroke="#3c497f" stroke-width="1.500"/><rect x="1" y="2.500" width="6" height="9" fill="#3c497f"/><rect x="2.500" y="4.500" width="1.200" height="1.200" fill="#fff"/><rect x="4.500" y="4.500" width="1.200" height="1.200" fill="#fff"/><rect x="2.500" y="7" width="1.200" height="1.200" fill="#fff"/><circle cx="5.500" cy="9.200" r="1.500" fill="#fff"/></svg>
<div class="t" style="left:545px;top:98px;height:13px;line-height:13px;font-size:9.3px;color:#3c497f;letter-spacing:-0.492px;font-weight:bold;">Location :</div>
<div class="t" style="left:586px;top:98px;height:11px;line-height:11px;font-size:8.1px;color:#3c497f;letter-spacing:0.004px;">KHLIEHRIAT SUBDIVISION</div>
<svg class="abs" style="left:1093px;top:94px" width="20" height="20" viewBox="0 0 20 20"><g fill="none" stroke="#3b8ce2" stroke-width="1.100"><circle cx="10" cy="5" r="3.200" fill="#cfe4fa"/><path d="M6.800 4.200c1-1.500 5-1.500 6.400 0" fill="#9ccaf5"/><path d="M5.500 13.500c.3-3 2-4.200 4.500-4.200s4.200 1.200 4.500 4.200z" fill="#cfe4fa"/><path d="M3.500 11.500C1 12.500.6 15 4 16.500M16.500 11.500c2.500 1 2.900 3.500-.5 5M7 17.800c2 .5 4 .5 6 0"/></g><path d="M2.600 17.500l2.800.3-.9-2.600zM17.400 17.500l-2.800.3.900-2.600z" fill="#3b8ce2"/></svg>
<svg class="abs" style="left:1123.500px;top:98px" width="13" height="13" viewBox="0 0 13 13"><circle cx="6.500" cy="6.500" r="5.600" fill="none" stroke="#6a5f72" stroke-width="1.300"/><path d="M6.700 3.300v3.500H4.200" fill="none" stroke="#6a5f72" stroke-width="1.200"/></svg>
<div class="abs" style="left:1122px;top:88px;width:25px;height:11px;border-radius:5.500px;background:#2b9be6"></div>
<div class="t" style="left:1126.5px;top:89px;height:10px;line-height:10px;font-size:7.2px;color:#fff;letter-spacing:-0.006px;font-weight:bold;">2700</div>
<svg class="abs" style="left:1165.500px;top:93.300px" width="21.200" height="21.200" viewBox="0 0 22 22"><circle cx="11" cy="11" r="11" fill="#4d5989"/><clipPath id="avc"><circle cx="11" cy="11" r="11"/></clipPath><g clip-path="url(#avc)"><path d="M11 3.800c2.300 0 3.900 1.900 3.900 4.600 0 1.800-.8 3.500-1.900 4.400v1.300c0 .8 3.800 1.600 5.200 3.400.9 1.200 1 3.500 1 4.500H2.800c0-1 .1-3.300 1-4.500C5.200 15.700 9 14.900 9 14.100v-1.300C7.900 11.900 7.100 10.200 7.100 8.400c0-2.700 1.600-4.600 3.900-4.600z" fill="#e9edef"/></g></svg>
<div class="t" style="left:1194.4px;top:100px;height:10px;line-height:10px;font-size:7.4px;color:#8e8fa0;letter-spacing:0.029px;">SUPERADMIN</div>
<div class="abs" style="left:186px;top:136px;width:1064px;height:207px;background:#e9e9e9"></div>
<div class="abs" style="left:186px;top:167px;width:1064px;height:1px;background:#dedee0"></div>
<div class="abs" style="left:186px;top:349px;width:1064px;height:218px;background:#e9e9e9"></div>
<div class="abs" style="left:186px;top:573px;width:1064px;height:115px;background:#e9e9e9"></div>
<div class="t" style="left:202.7px;top:144px;height:15px;line-height:15px;font-size:11.3px;color:#777;letter-spacing:0.495px;font-weight:bold;">Bill Generation</div>
<div class="t" style="left:200.7px;top:175px;height:16px;line-height:16px;font-size:11.6px;color:#e53030;letter-spacing:0.412px;">Note*:</div>
<div class="t" style="left:238.2px;top:175px;height:16px;line-height:16px;font-size:11.6px;color:#222;letter-spacing:0.700px;font-weight:bold;">Consumer</div>
<div class="abs" style="left:200px;top:197px;width:1036px;height:140px;border:1px solid #dddde0;border-radius:4px"></div>
<div class="abs" style="left:200.700px;top:201px;width:96px;height:18.500px;background:#5f6ca3"></div>
<div class="t" style="left:209px;top:204px;height:13px;line-height:13px;font-size:9.3px;color:#fff;letter-spacing:-0.072px;font-weight:bold;">Consumer Details</div>
<div class="t" style="left:212.2px;top:224px;height:12px;line-height:12px;font-size:9.2px;color:#444;letter-spacing:0.161px;">Consumer ID</div>
<div class="t" style="left:271px;top:225px;height:12px;line-height:12px;font-size:9.2px;color:#e53030;letter-spacing:0.000px;">*</div>
<div class="abs" style="left:212px;top:242px;width:1013px;height:21px;border:1px solid #d6d6da;background:#ebebeb"></div>
<div class="t" style="left:212px;top:268px;height:12px;line-height:12px;font-size:9.2px;color:#444;letter-spacing:0.099px;">Meter Serial No</div>
<div class="abs" style="left:212px;top:287px;width:300px;height:21px;border:1px solid #d6d6da;background:#ebebeb"></div>
<div class="abs" style="left:186px;top:352.3px;width:71.7px;height:19.4px;background:#5f6ca3;border-radius:0 10px 10px 0;box-shadow:0 1px 3px rgba(0,0,0,.25)"></div>
<div class="t" style="left:194px;top:356px;height:13px;line-height:13px;font-size:9.3px;color:#fff;letter-spacing:0.054px;font-weight:bold;">Items Added</div>
<div class="abs" style="left:186px;top:576.7px;width:75px;height:19.3px;background:#5f6ca3;border-radius:0 10px 10px 0;box-shadow:0 1px 3px rgba(0,0,0,.25)"></div>
<div class="t" style="left:194px;top:580px;height:13px;line-height:13px;font-size:9.3px;color:#fff;letter-spacing:-0.157px;font-weight:bold;">Billing Details</div>
<div class="t" style="left:205.3px;top:376px;height:12px;line-height:12px;font-size:9.2px;color:#454545;letter-spacing:0.221px;">Consumer ID</div>
<div class="t" style="left:209.3px;top:398px;height:12px;line-height:12px;font-size:8.8px;color:#222;letter-spacing:0.562px;font-weight:bold;">1000345448</div>
<div class="t" style="left:205.3px;top:424px;height:12px;line-height:12px;font-size:9.2px;color:#454545;letter-spacing:0.481px;">Category</div>
<div class="t" style="left:209.3px;top:446px;height:12px;line-height:12px;font-size:8.8px;color:#222;letter-spacing:0.031px;font-weight:bold;">WSHT</div>
<div class="t" style="left:205.3px;top:468px;height:12px;line-height:12px;font-size:9.2px;color:#454545;letter-spacing:0.227px;">Sanction Load(KW)</div>
<div class="t" style="left:209.3px;top:490px;height:12px;line-height:12px;font-size:8.8px;color:#222;letter-spacing:0.506px;font-weight:bold;">0</div>
<div class="t" style="left:205.3px;top:512px;height:12px;line-height:12px;font-size:9.2px;color:#454545;letter-spacing:0.394px;">Govt/Pvt Installation</div>
<div class="t" style="left:209.3px;top:535px;height:12px;line-height:12px;font-size:8.8px;color:#222;letter-spacing:-1.014px;font-weight:bold;">SG</div>
<div class="t" style="left:197.3px;top:600px;height:12px;line-height:12px;font-size:9.2px;color:#454545;letter-spacing:0.222px;">Reading Date</div>
<div class="abs" style="left:197.5px;top:618px;width:248px;height:21px;border:1px solid #d2d3d8;background:#dfe0e5"></div>
<div class="t" style="left:202.3px;top:622px;height:12px;line-height:12px;font-size:8.8px;color:#555;letter-spacing:0.487px;">2025-09-18</div>
<div class="abs" style="left:461.5px;top:618px;width:249px;height:21px;border:1px solid #d2d3d8;background:#dfe0e5"></div>
<div class="t" style="left:466.5px;top:622px;height:12px;line-height:12px;font-size:8.8px;color:#555;letter-spacing:0.498px;">2025-09-18</div>
<div class="abs" style="left:726.5px;top:618px;width:248px;height:21px;border:1px solid #d2d3d8;background:#dfe0e5"></div>
<div class="t" style="left:731.5px;top:622px;height:12px;line-height:12px;font-size:8.8px;color:#555;letter-spacing:0.665px;">2025-09-28</div>
<div class="t" style="left:197.3px;top:644px;height:12px;line-height:12px;font-size:9.2px;color:#454545;letter-spacing:0.204px;">Meter Status</div>
<div class="t" style="left:252.5px;top:645px;height:12px;line-height:12px;font-size:9.2px;color:#e53030;letter-spacing:0.000px;">*</div>
<div class="abs" style="left:197.500px;top:662.500px;width:248px;height:24.500px;border:1px solid #bcbcbc;border-radius:3px;background:linear-gradient(#efefef,#e4e4e4)"></div>
<div class="t" style="left:203.3px;top:666px;height:15px;line-height:15px;font-size:10.8px;color:#555;letter-spacing:0.540px;">OK (Normal)</div>
<svg class="abs" style="left:433.500px;top:668.500px" width="5" height="3" viewBox="0 0 5 3"><path d="M0 0h5L2.500 3z" fill="#777"/></svg>
<div class="abs" style="left:1224.200px;top:629px;width:32px;height:32px;border-radius:16px;background:#2d9fe0;box-shadow:0 1px 4px rgba(0,0,0,.25)"></div>
<svg class="abs" style="left:1233.700px;top:638.500px" width="13" height="13" viewBox="0 0 13 13"><g fill="none" stroke="#fff" stroke-width="1.300"><circle cx="6.500" cy="6.500" r="2"/><path d="M6.500 .8l1 1.600 1.900-.3.500 1.800 1.800.8-.8 1.800.8 1.800-1.800.8-.5 1.800-1.900-.3-1 1.600-1-1.600-1.900.3-.5-1.800-1.800-.8.800-1.800-.8-1.800 1.800-.8.500-1.800 1.900.3z" stroke-linejoin="round"/></g></svg>
<div class="abs" style="left:1270px;top:80px;width:10px;height:608px;background:#2b2b2b"></div>
<div class="abs" style="left:1272.500px;top:93px;width:5.500px;height:250px;border-radius:3px;background:#9a9a9a"></div>
<svg class="abs" style="left:1271.500px;top:84px" width="7" height="5" viewBox="0 0 7 5"><path d="M3.500 0L7 5H0z" fill="#a0a0a0"/></svg>
<svg class="abs" style="left:1271.500px;top:680px" width="7" height="5" viewBox="0 0 7 5"><path d="M3.500 5L7 0H0z" fill="#a0a0a0"/></svg>
<div class="abs" style="left:0;top:79.500px;width:1280px;height:1px;background:#253c42"></div>
<div class="abs" style="left:288.500px;top:138.500px;width:889px;height:474.500px;background:#fff;border:1px solid #d9d9dc;border-radius:3px"></div>
<div class="abs" style="left:292px;top:163px;width:884px;height:447px;overflow:hidden"><div class="abs" style="left:-292px;top:-163px;width:1280px;height:720px">
<div class="abs" style="left:507px;top:155.95px;width:639.2px;height:1.1px;background:#1a1a1a"></div>
<div class="abs" style="left:507px;top:170.95px;width:639.2px;height:1.1px;background:#1a1a1a"></div>
<div class="abs" style="left:507px;top:186.95px;width:639.2px;height:1.1px;background:#1a1a1a"></div>
<div class="abs" style="left:507px;top:201.95px;width:639.2px;height:1.1px;background:#1a1a1a"></div>
<div class="abs" style="left:507px;top:216.95px;width:639.2px;height:1.1px;background:#1a1a1a"></div>
<div class="abs" style="left:507px;top:231.95px;width:639.2px;height:1.1px;background:#1a1a1a"></div>
<div class="abs" style="left:300.5px;top:231.85px;width:845.7px;height:1.3px;background:#1a1a1a"></div>
<div class="abs" style="left:299.95px;top:150px;width:1.1px;height:82.5px;background:#1a1a1a"></div>
<div class="abs" style="left:506.95px;top:150px;width:1.1px;height:82.5px;background:#1a1a1a"></div>
<div class="abs" style="left:1145.95px;top:150px;width:1.1px;height:82.5px;background:#1a1a1a"></div>
<div class="abs" style="left:717.95px;top:150px;width:1.1px;height:82.5px;background:#1a1a1a"></div>
<div class="abs" style="left:824.95px;top:150px;width:1.1px;height:82.5px;background:#1a1a1a"></div>
<div class="abs" style="left:984.95px;top:150px;width:1.1px;height:67.4px;background:#1a1a1a"></div>
<div class="t" style="left:579.21px;top:158px;height:12px;line-height:12px;font-size:8.5px;color:#1e1e1e;letter-spacing:0.267px;">Connection Type</div>
<div class="t" style="left:765.4px;top:158px;height:12px;line-height:12px;font-size:8.5px;color:#1e1e1e;letter-spacing:0.719px;">SG</div>
<div class="t" style="left:868.43px;top:158px;height:12px;line-height:12px;font-size:8.5px;color:#1e1e1e;letter-spacing:0.255px;">Connection Status</div>
<div class="t" style="left:1041.63px;top:158px;height:12px;line-height:12px;font-size:8.5px;color:#1e1e1e;letter-spacing:0.335px;">INSERVICE</div>
<div class="t" style="left:563.46px;top:173px;height:12px;line-height:12px;font-size:8.5px;color:#1e1e1e;letter-spacing:0.289px;">Recorded Demand(KVA)</div>
<div class="t" style="left:763.26px;top:174px;height:11px;line-height:11px;font-size:8.2px;color:#1e1e1e;letter-spacing:-0.321px;">1700</div>
<div class="t" style="left:867.27px;top:173px;height:12px;line-height:12px;font-size:8.5px;color:#1e1e1e;letter-spacing:0.263px;">Type Of CT-PT Set</div>
<div class="t" style="left:582.63px;top:188px;height:12px;line-height:12px;font-size:8.5px;color:#1e1e1e;letter-spacing:0.259px;">Billing Demand</div>
<div class="t" style="left:767.01px;top:188px;height:12px;line-height:12px;font-size:8.5px;color:#1e1e1e;letter-spacing:0.325px;">63</div>
<div class="t" style="left:870.68px;top:188px;height:12px;line-height:12px;font-size:8.5px;color:#1e1e1e;letter-spacing:0.274px;">Meter Connected</div>
<div class="t" style="left:1048.21px;top:188px;height:12px;line-height:12px;font-size:8.5px;color:#1e1e1e;letter-spacing:0.279px;">LT Meter</div>
<div class="t" style="left:569.8px;top:204px;height:12px;line-height:12px;font-size:8.5px;color:#1e1e1e;letter-spacing:0.253px;">Transformer Capacity</div>
<div class="t" style="left:769.45px;top:204px;height:12px;line-height:12px;font-size:8.5px;color:#1e1e1e;letter-spacing:0.173px;">0</div>
<div class="t" style="left:864.17px;top:204px;height:12px;line-height:12px;font-size:8.5px;color:#1e1e1e;letter-spacing:0.253px;">Connection Location</div>
<div class="t" style="left:1050.55px;top:204px;height:12px;line-height:12px;font-size:8.5px;color:#1e1e1e;letter-spacing:0.422px;">RURAL</div>
<div class="t" style="left:554.37px;top:219px;height:12px;line-height:12px;font-size:8.5px;color:#1e1e1e;letter-spacing:0.224px;">Total Tariff Difference Amount</div>
<div class="t" style="left:755.92px;top:219px;height:12px;line-height:12px;font-size:8.5px;color:#1e1e1e;letter-spacing:-0.161px;">4,803.61</div>
<div class="t" style="left:310.45px;top:159px;height:12px;line-height:12px;font-size:9.2px;color:#111;letter-spacing:0.237px;font-weight:bold;">Name &amp; Address:</div>
<div class="t" style="left:392.72px;top:159px;height:13px;line-height:13px;font-size:9.3px;color:#1e1e1e;letter-spacing:0.308px;">Myndihati Water Supply</div>
<div class="t" style="left:337.45px;top:173px;height:13px;line-height:13px;font-size:9.3px;color:#1e1e1e;letter-spacing:0.297px;">Scheme - Myndihati Myndihati</div>
<div class="abs" style="left:1147px;top:163px;width:9.5px;height:69px;background:#fafafa"></div>
<div class="abs" style="left:1149px;top:150px;width:5.300px;height:70.500px;border-radius:2.700px;background:#8c8c8c"></div>
<svg class="abs" style="left:1148.800px;top:226.300px" width="5.800" height="4.200" viewBox="0 0 6 4"><path d="M0 0h6L3 4z" fill="#8c8c8c"/></svg>
<div class="abs" style="left:300.5px;top:237px;width:855.9px;height:39.8px;background:#428bb9"></div>
<div class="abs" style="left:300px;top:236.95px;width:856.9px;height:1.1px;background:#1a1a1a"></div>
<div class="abs" style="left:300px;top:256.95px;width:856.9px;height:1.1px;background:#1a1a1a"></div>
<div class="abs" style="left:300px;top:275.95px;width:856.9px;height:1.1px;background:#1a1a1a"></div>
<div class="abs" style="left:300px;top:291.95px;width:856.9px;height:1.1px;background:#1a1a1a"></div>
<div class="abs" style="left:300px;top:306.95px;width:856.9px;height:1.1px;background:#1a1a1a"></div>
<div class="abs" style="left:300px;top:321.95px;width:856.9px;height:1.1px;background:#1a1a1a"></div>
<div class="abs" style="left:300px;top:337.95px;width:856.9px;height:1.1px;background:#1a1a1a"></div>
<div class="abs" style="left:300px;top:352.95px;width:856.9px;height:1.1px;background:#1a1a1a"></div>
<div class="abs" style="left:300px;top:369.95px;width:856.9px;height:1.1px;background:#1a1a1a"></div>
<div class="abs" style="left:300px;top:385.95px;width:856.9px;height:1.1px;background:#1a1a1a"></div>
<div class="abs" style="left:300px;top:401.95px;width:856.9px;height:1.1px;background:#1a1a1a"></div>
<div class="abs" style="left:300px;top:416.95px;width:856.9px;height:1.1px;background:#1a1a1a"></div>
<div class="abs" style="left:300px;top:431.95px;width:856.9px;height:1.1px;background:#1a1a1a"></div>
<div class="abs" style="left:299.95px;top:237px;width:1.1px;height:195.6px;background:#1a1a1a"></div>
<div class="abs" style="left:1155.95px;top:237px;width:1.1px;height:195.6px;background:#1a1a1a"></div>
<div class="abs" style="left:547.95px;top:257.2px;width:1.1px;height:175.4px;background:#1a1a1a"></div>
<div class="abs" style="left:615.95px;top:257.2px;width:1.1px;height:175.4px;background:#1a1a1a"></div>
<div class="abs" style="left:751.95px;top:257.2px;width:1.1px;height:175.4px;background:#1a1a1a"></div>
<div class="abs" style="left:898.95px;top:257.2px;width:1.1px;height:175.4px;background:#1a1a1a"></div>
<div class="abs" style="left:1063.95px;top:257.2px;width:1.1px;height:175.4px;background:#1a1a1a"></div>
<div class="t" style="left:566.1px;top:241px;height:12px;line-height:12px;font-size:8.7px;color:#fff;letter-spacing:0.145px;font-weight:bold;">Meter Readings for New Meter ID:MEB01852 and Meter Status : OK (Normal)</div>
<div class="t" style="left:401.67px;top:262px;height:11px;line-height:11px;font-size:8px;color:#fff;letter-spacing:0.165px;font-weight:bold;">Description</div>
<div class="t" style="left:573.4px;top:262px;height:11px;line-height:11px;font-size:8px;color:#fff;letter-spacing:0.220px;font-weight:bold;">Date</div>
<div class="t" style="left:663.37px;top:262px;height:11px;line-height:11px;font-size:8px;color:#fff;letter-spacing:0.189px;font-weight:bold;">Kwh Meter</div>
<div class="t" style="left:803.48px;top:262px;height:11px;line-height:11px;font-size:8px;color:#fff;letter-spacing:0.179px;font-weight:bold;">Kvah Meter</div>
<div class="t" style="left:956.66px;top:262px;height:11px;line-height:11px;font-size:8px;color:#fff;letter-spacing:0.202px;font-weight:bold;">Rec Demand</div>
<div class="t" style="left:1096.28px;top:262px;height:11px;line-height:11px;font-size:8px;color:#fff;letter-spacing:0.204px;font-weight:bold;">Rec PF</div>
<div class="t" style="left:391.85px;top:278px;height:12px;line-height:12px;font-size:8.5px;color:#1e1e1e;letter-spacing:0.209px;">Current Reading</div>
<div class="t" style="left:559.74px;top:278px;height:12px;line-height:12px;font-size:8.5px;color:#1e1e1e;letter-spacing:0.204px;">18-09-2025</div>
<div class="t" style="left:673.26px;top:279px;height:11px;line-height:11px;font-size:8.4px;color:#1e1e1e;letter-spacing:-0.295px;">16500</div>
<div class="t" style="left:814.76px;top:279px;height:11px;line-height:11px;font-size:8.4px;color:#1e1e1e;letter-spacing:-0.295px;">21000</div>
<div class="t" style="left:976.91px;top:278px;height:12px;line-height:12px;font-size:8.5px;color:#1e1e1e;letter-spacing:0.325px;">85</div>
<div class="t" style="left:1107.9px;top:278px;height:12px;line-height:12px;font-size:8.5px;color:#1e1e1e;letter-spacing:0.173px;">0</div>
<div class="t" style="left:389.37px;top:294px;height:12px;line-height:12px;font-size:8.5px;color:#1e1e1e;letter-spacing:0.211px;">Previous Reading</div>
<div class="t" style="left:559.74px;top:294px;height:12px;line-height:12px;font-size:8.5px;color:#1e1e1e;letter-spacing:0.204px;">31-07-2025</div>
<div class="t" style="left:673.26px;top:294px;height:11px;line-height:11px;font-size:8.4px;color:#1e1e1e;letter-spacing:-0.295px;">15847</div>
<div class="t" style="left:809.95px;top:294px;height:12px;line-height:12px;font-size:8.5px;color:#1e1e1e;letter-spacing:0.179px;">20333.4</div>
<div class="t" style="left:401.5px;top:309px;height:12px;line-height:12px;font-size:8.5px;color:#1e1e1e;letter-spacing:0.230px;">No Of Days</div>
<div class="t" style="left:577.51px;top:309px;height:12px;line-height:12px;font-size:8.5px;color:#1e1e1e;letter-spacing:0.325px;">49</div>
<div class="t" style="left:404.3px;top:324px;height:12px;line-height:12px;font-size:8.5px;color:#1e1e1e;letter-spacing:0.202px;">Difference</div>
<div class="t" style="left:677.01px;top:324px;height:12px;line-height:12px;font-size:8.5px;color:#1e1e1e;letter-spacing:0.249px;">653</div>
<div class="t" style="left:814.84px;top:324px;height:12px;line-height:12px;font-size:8.5px;color:#1e1e1e;letter-spacing:0.187px;">666.6</div>
<div class="t" style="left:389.63px;top:340px;height:12px;line-height:12px;font-size:8.5px;color:#1e1e1e;letter-spacing:0.184px;">Multiplying Factor</div>
<div class="t" style="left:679.46px;top:340px;height:12px;line-height:12px;font-size:8.5px;color:#1e1e1e;letter-spacing:0.325px;">20</div>
<div class="t" style="left:820.96px;top:340px;height:12px;line-height:12px;font-size:8.5px;color:#1e1e1e;letter-spacing:0.325px;">20</div>
<div class="t" style="left:976.91px;top:340px;height:12px;line-height:12px;font-size:8.5px;color:#1e1e1e;letter-spacing:0.325px;">20</div>
<div class="t" style="left:1107.9px;top:340px;height:12px;line-height:12px;font-size:8.5px;color:#1e1e1e;letter-spacing:0.173px;">0</div>
<div class="t" style="left:395.33px;top:356px;height:13px;line-height:13px;font-size:9.3px;color:#1e1e1e;letter-spacing:0.354px;">Consumption</div>
<div class="t" style="left:673.26px;top:357px;height:11px;line-height:11px;font-size:8.4px;color:#1e1e1e;letter-spacing:-0.295px;">13060</div>
<div class="t" style="left:814.76px;top:357px;height:11px;line-height:11px;font-size:8.4px;color:#1e1e1e;letter-spacing:-0.295px;">13332</div>
<div class="t" style="left:390.11px;top:372px;height:13px;line-height:13px;font-size:9.3px;color:#1e1e1e;letter-spacing:0.277px;">Additional Units</div>
<div class="t" style="left:681.9px;top:372px;height:12px;line-height:12px;font-size:8.5px;color:#1e1e1e;letter-spacing:0.173px;">0</div>
<div class="t" style="left:823.4px;top:372px;height:12px;line-height:12px;font-size:8.5px;color:#1e1e1e;letter-spacing:0.173px;">0</div>
<div class="t" style="left:380.48px;top:388px;height:13px;line-height:13px;font-size:9.3px;color:#1e1e1e;letter-spacing:0.314px;">Meter Change Units</div>
<div class="t" style="left:681.9px;top:388px;height:12px;line-height:12px;font-size:8.5px;color:#1e1e1e;letter-spacing:0.173px;">0</div>
<div class="t" style="left:823.4px;top:388px;height:12px;line-height:12px;font-size:8.5px;color:#1e1e1e;letter-spacing:0.173px;">0</div>
<div class="t" style="left:380.8px;top:404px;height:12px;line-height:12px;font-size:8.5px;color:#1e1e1e;letter-spacing:0.187px;">Violation Energy Units</div>
<div class="t" style="left:681.9px;top:404px;height:12px;line-height:12px;font-size:8.5px;color:#1e1e1e;letter-spacing:0.173px;">0</div>
<div class="t" style="left:808.65px;top:404px;height:12px;line-height:12px;font-size:8.5px;color:#1e1e1e;letter-spacing:-0.150px;">13233.05</div>
<div class="t" style="left:390.12px;top:419px;height:12px;line-height:12px;font-size:8.5px;color:#1e1e1e;letter-spacing:0.221px;">Net Consumption</div>
<div class="t" style="left:668.29px;top:420px;height:11px;line-height:11px;font-size:8.2px;color:#1e1e1e;letter-spacing:-0.297px;">13731.96</div>
<div class="t" style="left:809.79px;top:420px;height:11px;line-height:11px;font-size:8.2px;color:#1e1e1e;letter-spacing:-0.297px;">13731.96</div>
<div class="t" style="left:973.16px;top:420px;height:11px;line-height:11px;font-size:8.2px;color:#1e1e1e;letter-spacing:-0.321px;">1700</div>
<svg class="abs" style="left:302.500px;top:446px" width="4.500" height="6" viewBox="0 0 4 6"><path d="M4 0v6L0 3z" fill="#8c8c8c"/></svg>
<svg class="abs" style="left:1148.800px;top:446px" width="4.500" height="6" viewBox="0 0 4 6"><path d="M0 0v6L4 3z" fill="#8c8c8c"/></svg>
<div class="abs" style="left:311.500px;top:446.200px;width:830px;height:5.400px;border-radius:2.700px;background:#5e5e5e"></div>
<div class="abs" style="left:300.5px;top:457.4px;width:855.9px;height:28.3px;background:#428bb9"></div>
<div class="abs" style="left:300px;top:456.95px;width:856.9px;height:1.1px;background:#1a1a1a"></div>
<div class="abs" style="left:300px;top:470.95px;width:856.9px;height:1.1px;background:#1a1a1a"></div>
<div class="abs" style="left:300px;top:484.95px;width:856.9px;height:1.1px;background:#1a1a1a"></div>
<div class="abs" style="left:300px;top:500.95px;width:856.9px;height:1.1px;background:#1a1a1a"></div>
<div class="abs" style="left:300px;top:515.95px;width:856.9px;height:1.1px;background:#1a1a1a"></div>
<div class="abs" style="left:300px;top:530.95px;width:856.9px;height:1.1px;background:#1a1a1a"></div>
<div class="abs" style="left:300px;top:545.95px;width:856.9px;height:1.1px;background:#1a1a1a"></div>
<div class="abs" style="left:300px;top:561.95px;width:856.9px;height:1.1px;background:#1a1a1a"></div>
<div class="abs" style="left:300px;top:576.95px;width:856.9px;height:1.1px;background:#1a1a1a"></div>
<div class="abs" style="left:300px;top:590.95px;width:856.9px;height:1.1px;background:#1a1a1a"></div>
<div class="abs" style="left:300px;top:606.7px;width:856.9px;height:1.6px;background:#1a1a1a"></div>
<div class="abs" style="left:299.95px;top:457.4px;width:1.1px;height:154.6px;background:#1a1a1a"></div>
<div class="abs" style="left:1155.95px;top:457.4px;width:1.1px;height:154.6px;background:#1a1a1a"></div>
<div class="abs" style="left:923.95px;top:471.7px;width:1.1px;height:140.3px;background:#1a1a1a"></div>
<div class="t" style="left:693.95px;top:459px;height:11px;line-height:11px;font-size:8px;color:#fff;letter-spacing:0.145px;font-weight:bold;">Your Detailed Bill</div>
<div class="t" style="left:589.67px;top:473px;height:11px;line-height:11px;font-size:8px;color:#fff;letter-spacing:0.165px;font-weight:bold;">Description</div>
<div class="t" style="left:1014.4px;top:473px;height:11px;line-height:11px;font-size:8px;color:#fff;letter-spacing:0.171px;font-weight:bold;">Amount (Rs.)</div>
<div class="t" style="left:307.8px;top:488px;height:11px;line-height:11px;font-size:8.2px;color:#1e1e1e;letter-spacing:0.138px;">Fixed Charges : For 63.000 KVA at Rs: 410 per KVA at BM: (49/62)*2</div>
<div class="t" style="left:1021.85px;top:488px;height:11px;line-height:11px;font-size:8.2px;color:#1e1e1e;letter-spacing:0.090px;">40,828.06</div>
<div class="t" style="left:307.8px;top:504px;height:11px;line-height:11px;font-size:8.2px;color:#1e1e1e;letter-spacing:0.026px;">Energy Charges: For The First Slab Rs: 7.91 per KVAh</div>
<div class="t" style="left:1024.18px;top:504px;height:11px;line-height:11px;font-size:8.2px;color:#1e1e1e;letter-spacing:0.089px;">3,946.39</div>
<div class="t" style="left:307.8px;top:519px;height:11px;line-height:11px;font-size:8.2px;color:#1e1e1e;letter-spacing:-0.691px;">FPPAS:</div>
<div class="t" style="left:1038.13px;top:519px;height:11px;line-height:11px;font-size:8.2px;color:#1e1e1e;letter-spacing:0.080px;">0</div>
<div class="t" style="left:307.8px;top:534px;height:11px;line-height:11px;font-size:8.2px;color:#1e1e1e;letter-spacing:0.010px;">Electricity Duty : For 13,731.96 KVAh at Rs: 0.06 per KVAh</div>
<div class="t" style="left:1027.67px;top:534px;height:11px;line-height:11px;font-size:8.2px;color:#1e1e1e;letter-spacing:0.096px;">823.92</div>
<div class="t" style="left:307.8px;top:549px;height:11px;line-height:11px;font-size:8.2px;color:#1e1e1e;letter-spacing:0.316px;">Excess Demand Charges</div>
<div class="t" style="left:1019.57px;top:549px;height:11px;line-height:11px;font-size:7.8px;color:#1e1e1e;letter-spacing:-0.344px;">2,165,831.61</div>
<div class="t" style="left:307.8px;top:565px;height:11px;line-height:11px;font-size:8.2px;color:#1e1e1e;letter-spacing:0.167px;">Excess Energy Charges</div>
<div class="t" style="left:1019.53px;top:565px;height:11px;line-height:11px;font-size:8.2px;color:#1e1e1e;letter-spacing:0.089px;">209,346.82</div>
<div class="t" style="left:307.8px;top:579px;height:11px;line-height:11px;font-size:8.2px;color:#1e1e1e;letter-spacing:0.257px;">TMC Charges</div>
<div class="t" style="left:1027.76px;top:580px;height:10px;line-height:10px;font-size:7.6px;color:#1e1e1e;letter-spacing:-0.349px;">1991.61</div>
<div class="t" style="left:307.8px;top:594px;height:11px;line-height:11px;font-size:8.2px;color:#1e1e1e;letter-spacing:-0.607px;">DPC</div>
<div class="t" style="left:1026.53px;top:594px;height:11px;line-height:11px;font-size:7.7px;color:#1e1e1e;letter-spacing:-0.305px;">1,339.01</div>
</div></div>
<svg class="abs" style="left:1167.300px;top:167.500px" width="6" height="4.500" viewBox="0 0 6 4"><path d="M0 4h6L3 0z" fill="#8c8c8c"/></svg>
<svg class="abs" style="left:1167.300px;top:603.200px" width="6" height="4.500" viewBox="0 0 6 4"><path d="M0 0h6L3 4z" fill="#8c8c8c"/></svg>
<div class="abs" style="left:1167.400px;top:262px;width:5.800px;height:201.200px;border-radius:2.900px;background:#8c8c8c"></div>
<div class="abs" style="left:292px;top:142px;width:883px;height:21px;border-radius:2px;background:linear-gradient(#4a80a8,#2a6a90 55%,#1a5f85);box-shadow:0 0 0 .5px #2a6a90"></div>
<div class="t" style="left:629.5px;top:146px;height:12px;line-height:12px;font-size:8.7px;color:#fff;letter-spacing:0.246px;font-weight:bold;">Bill Details for Consumer ID 1000345448</div>
<div class="abs" style="left:1158.800px;top:148.300px;width:12px;height:12.300px;background:#fff;border:1.500px solid #1e1e1e"></div>
<svg class="abs" style="left:1161.300px;top:150.900px" width="7" height="7" viewBox="0 0 7 7"><path d="M.5 .5l6 6M6.500 .5l-6 6" stroke="#333" stroke-width="1.100"/></svg>
<div class="abs" id="task"></div>
<svg class="abs" style="left:14px;top:696.700px" width="15.200" height="15.300" viewBox="0 0 15 15"><defs><linearGradient id="wg" x1="0" y1="0" x2="1" y2="1"><stop offset="0" stop-color="#6fd0f7"/><stop offset="1" stop-color="#1a8fe0"/></linearGradient></defs><rect x="0" y="0" width="7" height="7" fill="url(#wg)"/><rect x="8" y="0" width="7" height="7" fill="url(#wg)"/><rect x="0" y="8" width="7" height="7" fill="url(#wg)"/><rect x="8" y="8" width="7" height="7" fill="url(#wg)"/></svg>
<div class="abs" style="left:38px;top:693px;width:146.200px;height:21.400px;border-radius:10.700px;background:#36373a"></div>
<svg class="abs" style="left:46.400px;top:699.200px" width="10" height="10" viewBox="0 0 10 10"><circle cx="4.200" cy="4.200" r="3.300" fill="none" stroke="#e6e6e6" stroke-width="1.200"/><path d="M6.700 6.700l2.800 2.800" stroke="#e6e6e6" stroke-width="1.300"/></svg>
<div class="t" style="left:62.4px;top:698px;height:12px;line-height:12px;font-size:8.8px;color:#d4d4d4;letter-spacing:-0.057px;">Search</div>
<div class="abs" style="left:363.500px;top:691px;width:26px;height:26px;border-radius:3px;background:#303030"></div>
<div class="abs" style="left:568.500px;top:691px;width:26px;height:26px;border-radius:3px;background:#8c4652"></div>
<svg class="abs" style="left:192px;top:695.5px" width="17" height="17" viewBox="0 0 16 16"><defs><linearGradient id="cp" x1="0" y1="0" x2="1" y2="1"><stop offset="0" stop-color="#3fa0f5"/><stop offset=".5" stop-color="#b45ce8"/><stop offset="1" stop-color="#f0a040"/></linearGradient></defs><path d="M5 2h5l4 6-3 6H6L2 8z" fill="url(#cp)"/><path d="M6 5h3.500l1.500 3-1.500 3H6.500L5 8z" fill="#fff" opacity=".55"/></svg>
<svg class="abs" style="left:221.5px;top:695.5px" width="17" height="17" viewBox="0 0 16 16"><rect x="6" y="3" width="9" height="10" rx="1" fill="#1a8ae6"/><path d="M8 6l3.500 2.500L15 6v5H8z" fill="#e9f3fc"/><rect x="1" y="3.500" width="8.500" height="9" rx="1" fill="#0f64b8"/><ellipse cx="5.200" cy="8" rx="2.100" ry="2.500" fill="none" stroke="#fff" stroke-width="1.300"/></svg>
<svg class="abs" style="left:250.5px;top:695.5px" width="17" height="17" viewBox="0 0 16 16"><path d="M1 3.500c0-.6.400-1 1-1h3.500l1.500 1.500H14c.6 0 1 .4 1 1V13H1z" fill="#f2b92d"/><rect x="1" y="6" width="14" height="7.500" rx=".8" fill="#fcd659"/><rect x="4" y="10" width="8" height="3.500" fill="#3a8be0"/></svg>
<svg class="abs" style="left:280px;top:695.5px" width="17" height="17" viewBox="0 0 16 16"><g fill="none" stroke="#e8c64a" stroke-width="1.400"><circle cx="8" cy="9" r="5.500"/><circle cx="5.500" cy="4.500" r="2.300"/><circle cx="10.500" cy="4.500" r="2.300"/><path d="M8 3.500V9"/></g></svg>
<svg class="abs" style="left:309px;top:695.5px" width="17" height="17" viewBox="0 0 16 16"><circle cx="8" cy="8" r="7" fill="#1b5fae"/><path d="M3 4l6 2-2 2 5.500 4-7-2.500 2-2z" fill="#fff"/></svg>
<svg class="abs" style="left:338.5px;top:695.5px" width="17" height="17" viewBox="0 0 16 16"><rect x="1" y="1" width="14" height="14" fill="#18a0a8"/><path d="M9 3L5.500 8.500h2.500L7 13l3.500-5.500H8z" fill="#fff"/></svg>
<svg class="abs" style="left:367.5px;top:695.5px" width="17" height="17" viewBox="0 0 16 16"><circle cx="8" cy="8" r="7" fill="#e8453c"/><path d="M8 8L1.900 4.500A7 7 0 0 0 5 14.300z" fill="#31a350"/><path d="M8 8l-3 6.300A7 7 0 0 0 14.100 4.500z" fill="#fbc116"/><path d="M8 8L1.900 4.500A7 7 0 0 1 14.100 4.500z" fill="#e8453c"/><circle cx="8" cy="8" r="3.300" fill="#fff"/><circle cx="8" cy="8" r="2.600" fill="#4a8af4"/></svg>
<svg class="abs" style="left:397px;top:695.5px" width="17" height="17" viewBox="0 0 16 16"><rect x="6" y="4" width="8" height="8" rx="1.500" fill="#7b83eb"/><circle cx="11" cy="3" r="1.800" fill="#7b83eb"/><rect x="1" y="4.500" width="8" height="8" rx="1" fill="#4b53bc"/><path d="M3 6.500h4M5 6.500v4.500" stroke="#fff" stroke-width="1.200"/><circle cx="12.500" cy="3" r="3.500" fill="#3a9ae8"/><text x="12.500" y="5.200" font-size="6" font-weight="bold" fill="#fff" text-anchor="middle" font-family="Liberation Sans,sans-serif">4</text></svg>
<svg class="abs" style="left:426.5px;top:695.5px" width="17" height="17" viewBox="0 0 16 16"><circle cx="8" cy="8.500" r="6.800" fill="#ff9a1f"/><path d="M2 5c1-2 3-3.500 6-3.500 4 0 6.800 3 6.800 7A6.800 6.800 0 0 1 8 15.300c-3 0-5-2-5.500-4 2 2 5 1 5-1.500S5 7 4 8c0-1.500-1-2-2-3z" fill="#f0432b"/><circle cx="9" cy="9" r="3.200" fill="#8a3ff0"/><circle cx="9" cy="9" r="2.200" fill="#5b3fd0"/></svg>
<svg class="abs" style="left:455.5px;top:695.5px" width="17" height="17" viewBox="0 0 16 16"><circle cx="8" cy="8" r="7" fill="#3a3260"/><ellipse cx="8" cy="8" rx="7" ry="2.800" fill="#f4f0ff"/><rect x="1" y="7.400" width="14" height="1.200" fill="#f79a2a"/></svg>
<svg class="abs" style="left:485px;top:695.5px" width="17" height="17" viewBox="0 0 16 16"><rect x="1" y="1" width="14" height="14" rx="2.500" fill="#fe2857"/><path d="M1 10V3.500C1 2 2 1 3.500 1H10z" fill="#087cfa"/><path d="M15 6v6.500c0 1.500-1 2.500-2.500 2.500H6z" fill="#fc801d"/><rect x="3.500" y="3.500" width="9" height="9" fill="#000"/><text x="4.500" y="9.500" font-size="5" font-weight="bold" fill="#fff" font-family="Liberation Sans,sans-serif">IJ</text><rect x="4.500" y="10.800" width="3.500" height=".8" fill="#fff"/></svg>
<svg class="abs" style="left:514px;top:695.5px" width="17" height="17" viewBox="0 0 16 16"><rect x="2" y="2" width="12" height="13" fill="#f3f6e8"/><path d="M2 2h12v4H2z" fill="#9fd04a"/><path d="M4 8h8M4 10.500h8M4 13h5" stroke="#6a8a3a" stroke-width="1"/><path d="M9 9l4.500-6 1.500 1-4.500 6z" fill="#e8c840"/></svg>
<svg class="abs" style="left:543.5px;top:695.5px" width="17" height="17" viewBox="0 0 16 16"><rect x="1" y="2" width="14" height="12" rx="1.500" fill="#1b1b2f"/><rect x="1" y="2" width="14" height="12" rx="1.500" fill="none" stroke="#21d789" stroke-width="1"/><text x="8" y="10" font-size="6" font-weight="bold" fill="#fff" text-anchor="middle" font-family="Liberation Sans,sans-serif">QA</text><circle cx="12.500" cy="12" r="2.300" fill="#3a7bf0"/></svg>
<svg class="abs" style="left:572.5px;top:695.5px" width="17" height="17" viewBox="0 0 16 16"><rect x="2" y="1.500" width="8" height="7" fill="#3a9ad9"/><rect x="2.800" y="2.300" width="6.400" height="5.400" fill="#e6f2fb"/><rect x="7" y="8" width="7.500" height="6.500" rx="1" fill="#e8e8e8"/><path d="M8.500 8V6.500a2.200 2.200 0 0 1 4.400 0V8" fill="none" stroke="#e8e8e8" stroke-width="1.200"/><path d="M2 10l4 4.500M6 14.500v-3M6 14.500H3" stroke="#35c25a" stroke-width="1.500" fill="none"/></svg>
<svg class="abs" style="left:602px;top:695.5px" width="17" height="17" viewBox="0 0 16 16"><rect x="5" y="1.500" width="10" height="13" rx="1" fill="#2b7cd3"/><path d="M5 5h10M5 8.500h10M5 12h10" stroke="#1a5dab" stroke-width=".6"/><rect x="1" y="3.500" width="8.500" height="9" rx="1" fill="#185abd"/><path d="M2.800 5.800l1.200 4.700L5.200 6.500l1.200 4 1.200-4.700" fill="none" stroke="#fff" stroke-width="1"/></svg>
<svg class="abs" style="left:631.5px;top:695.5px" width="17" height="17" viewBox="0 0 16 16"><rect x="3" y="1" width="10" height="14" rx="1.200" fill="#5c6670"/><rect x="4.300" y="2.500" width="7.400" height="3" fill="#cfe8f7"/><g fill="#e9edf0"><rect x="4.300" y="7" width="2" height="1.800"/><rect x="7" y="7" width="2" height="1.800"/><rect x="4.300" y="9.600" width="2" height="1.800"/><rect x="7" y="9.600" width="2" height="1.800"/><rect x="4.300" y="12.200" width="2" height="1.800"/><rect x="7" y="12.200" width="2" height="1.800"/></g><rect x="9.700" y="7" width="2" height="7" fill="#3a9ae8"/></svg>
<svg class="abs" style="left:661px;top:695.5px" width="17" height="17" viewBox="0 0 16 16"><path d="M8 1l6 2v5c0 3.500-2.500 6-6 7-3.500-1-6-3.500-6-7V3z" fill="#d9342b"/><rect x="4.500" y="5" width="7" height="5.500" fill="#fff"/><path d="M4.500 6.800h7M4.500 8.700h7M7 5v1.800M9.500 5v1.800M5.800 6.800v1.900M8.200 6.800v1.900M10.500 6.800v1.900" stroke="#d9342b" stroke-width=".6"/></svg>
<svg class="abs" style="left:690px;top:695.5px" width="17" height="17" viewBox="0 0 16 16"><rect x="5" y="1.500" width="10" height="13" rx="1" fill="#21a366"/><path d="M10 1.500v13M5 5h10M5 8.500h10M5 12h10" stroke="#107c41" stroke-width=".6"/><rect x="1" y="3.500" width="8.500" height="9" rx="1" fill="#107c41"/><path d="M3.300 5.800l4 4.700M7.300 5.800l-4 4.700" stroke="#fff" stroke-width="1.200"/></svg>
<div class="abs" style="left:228.5px;top:715px;width:3px;height:1.500px;border-radius:1px;background:#8d8d8d"></div>
<div class="abs" style="left:257.5px;top:715px;width:3px;height:1.500px;border-radius:1px;background:#8d8d8d"></div>
<div class="abs" style="left:287px;top:715px;width:3px;height:1.500px;border-radius:1px;background:#8d8d8d"></div>
<div class="abs" style="left:404px;top:715px;width:3px;height:1.500px;border-radius:1px;background:#8d8d8d"></div>
<div class="abs" style="left:492px;top:715px;width:3px;height:1.500px;border-radius:1px;background:#8d8d8d"></div>
<div class="abs" style="left:521px;top:715px;width:3px;height:1.500px;border-radius:1px;background:#8d8d8d"></div>
<div class="abs" style="left:550.5px;top:715px;width:3px;height:1.500px;border-radius:1px;background:#8d8d8d"></div>
<div class="abs" style="left:609px;top:715px;width:3px;height:1.500px;border-radius:1px;background:#8d8d8d"></div>
<div class="abs" style="left:638.5px;top:715px;width:3px;height:1.500px;border-radius:1px;background:#8d8d8d"></div>
<div class="abs" style="left:668px;top:715px;width:3px;height:1.500px;border-radius:1px;background:#8d8d8d"></div>
<div class="abs" style="left:697px;top:715px;width:3px;height:1.500px;border-radius:1px;background:#8d8d8d"></div>
<div class="abs" style="left:371.500px;top:714.800px;width:9px;height:1.700px;border-radius:1px;background:#4cb3f5"></div>
<div class="abs" style="left:570.500px;top:714.600px;width:22px;height:1.900px;border-radius:1px;background:#f0889c"></div>
<svg class="abs" style="left:1101px;top:701px" width="8" height="5" viewBox="0 0 8 5"><path d="M.7 4.300L4 1l3.300 3.300" fill="none" stroke="#f0f0f0" stroke-width="1.200"/></svg>
<svg class="abs" style="left:1120px;top:698px" width="13" height="13" viewBox="0 0 13 13"><g fill="none" stroke="#e8e8e8" stroke-width="1.100"><path d="M2 5.500A4.500 4.500 0 0 1 10.500 4M10.800 1.500V4.200H8.200M10.500 7A4.500 4.500 0 0 1 2.500 9M2 11.200V8.700h2.600"/></g><circle cx="9.800" cy="10.200" r="2.400" fill="#f59a23"/></svg>
<div class="t" style="left:1144.2px;top:695px;height:10px;line-height:10px;font-size:7.6px;color:#f2f2f2;letter-spacing:-0.735px;">ENG</div>
<div class="t" style="left:1148px;top:706px;height:10px;line-height:10px;font-size:7.6px;color:#f2f2f2;letter-spacing:-0.900px;">IN</div>
<svg class="abs" style="left:1171px;top:698.500px" width="12" height="10" viewBox="0 0 12 10"><g fill="none" stroke="#f0f0f0" stroke-width="1.100"><path d="M.8 3.500a7.500 7.500 0 0 1 10.400 0M2.500 5.500a5 5 0 0 1 7 0M4.200 7.300a2.600 2.600 0 0 1 3.600 0"/></g><circle cx="6" cy="8.800" r=".9" fill="#f0f0f0"/></svg>
<svg class="abs" style="left:1186.500px;top:698.500px" width="12" height="10" viewBox="0 0 12 10"><path d="M.8 3.500h2L5.500 1v8L2.800 6.500h-2z" fill="none" stroke="#f0f0f0" stroke-width="1" stroke-linejoin="round"/><path d="M7.200 3.200a2.500 2.500 0 0 1 0 3.600M8.800 1.800a4.500 4.500 0 0 1 0 6.400" fill="none" stroke="#f0f0f0" stroke-width="1"/></svg>
<svg class="abs" style="left:1203px;top:699.500px" width="12" height="8" viewBox="0 0 12 8"><rect x=".6" y=".6" width="9" height="6.800" rx="1.500" fill="none" stroke="#f0f0f0" stroke-width="1.100"/><rect x="2" y="2" width="4" height="4" rx=".5" fill="#f0f0f0"/><path d="M10.800 2.800v2.400" stroke="#f0f0f0" stroke-width="1.200"/></svg>
<div class="t" style="left:1247.3px;top:695px;height:10px;line-height:10px;font-size:7.6px;color:#f2f2f2;letter-spacing:0.120px;">16:14</div>
<div class="t" style="left:1226.3px;top:705px;height:10px;line-height:10px;font-size:7.6px;color:#f2f2f2;letter-spacing:0.180px;">18-09-2025</div>
</div></body></html>
